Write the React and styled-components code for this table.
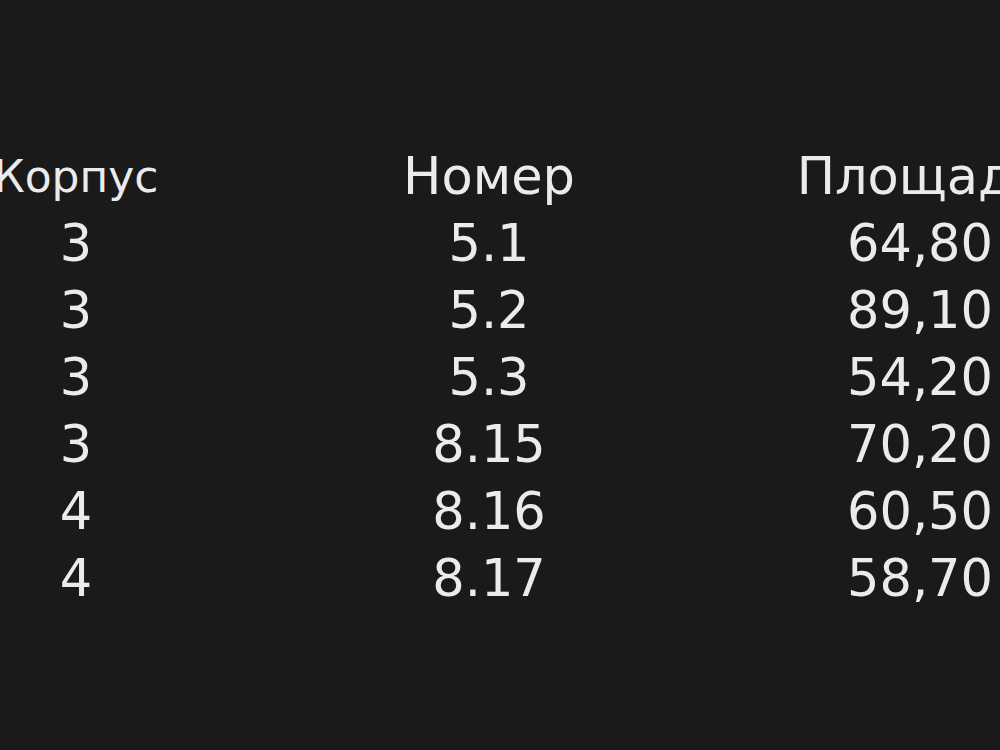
import React from "react";
import styled, { createGlobalStyle } from "styled-components";

const Global = createGlobalStyle`
  html, body {
    margin: 0;
    padding: 0;
    background: #1a1a1a;
    overflow: hidden;
  }
  body {
    width: 1000px;
    height: 750px;
  }
`;

const Page = styled.div`
  width: 1000px;
  height: 750px;
  overflow: hidden;
  background: #1a1a1a;
  padding-top: 143px;
  box-sizing: border-box;
`;

const Table = styled.div`
  display: grid;
  grid-template-columns: 152px 674px 188px;
  grid-auto-rows: 67px;
  width: 1014px;
  font-family: "DejaVu Sans", Verdana, sans-serif;
  color: #ebebeb;
`;

const Cell = styled.div`
  display: flex;
  justify-content: center;
  white-space: nowrap;
  font-size: ${(p) => p.$size || 51}px;
  line-height: 67px;
`;

const headers = [
  { text: "Корпус", size: 44 },
  { text: "Номер" },
  { text: "Площадь" },
];

const rows = [
  ["3", "5.1", "64,80"],
  ["3", "5.2", "89,10"],
  ["3", "5.3", "54,20"],
  ["3", "8.15", "70,20"],
  ["4", "8.16", "60,50"],
  ["4", "8.17", "58,70"],
];

export default function App() {
  return (
    <>
      <Global />
      <Page>
        <Table>
          {headers.map((h) => (
            <Cell key={h.text} $size={h.size}>
              {h.text}
            </Cell>
          ))}
          {rows.map((r, i) =>
            r.map((v, j) => <Cell key={`${i}-${j}`}>{v}</Cell>)
          )}
        </Table>
      </Page>
    </>
  );
}
